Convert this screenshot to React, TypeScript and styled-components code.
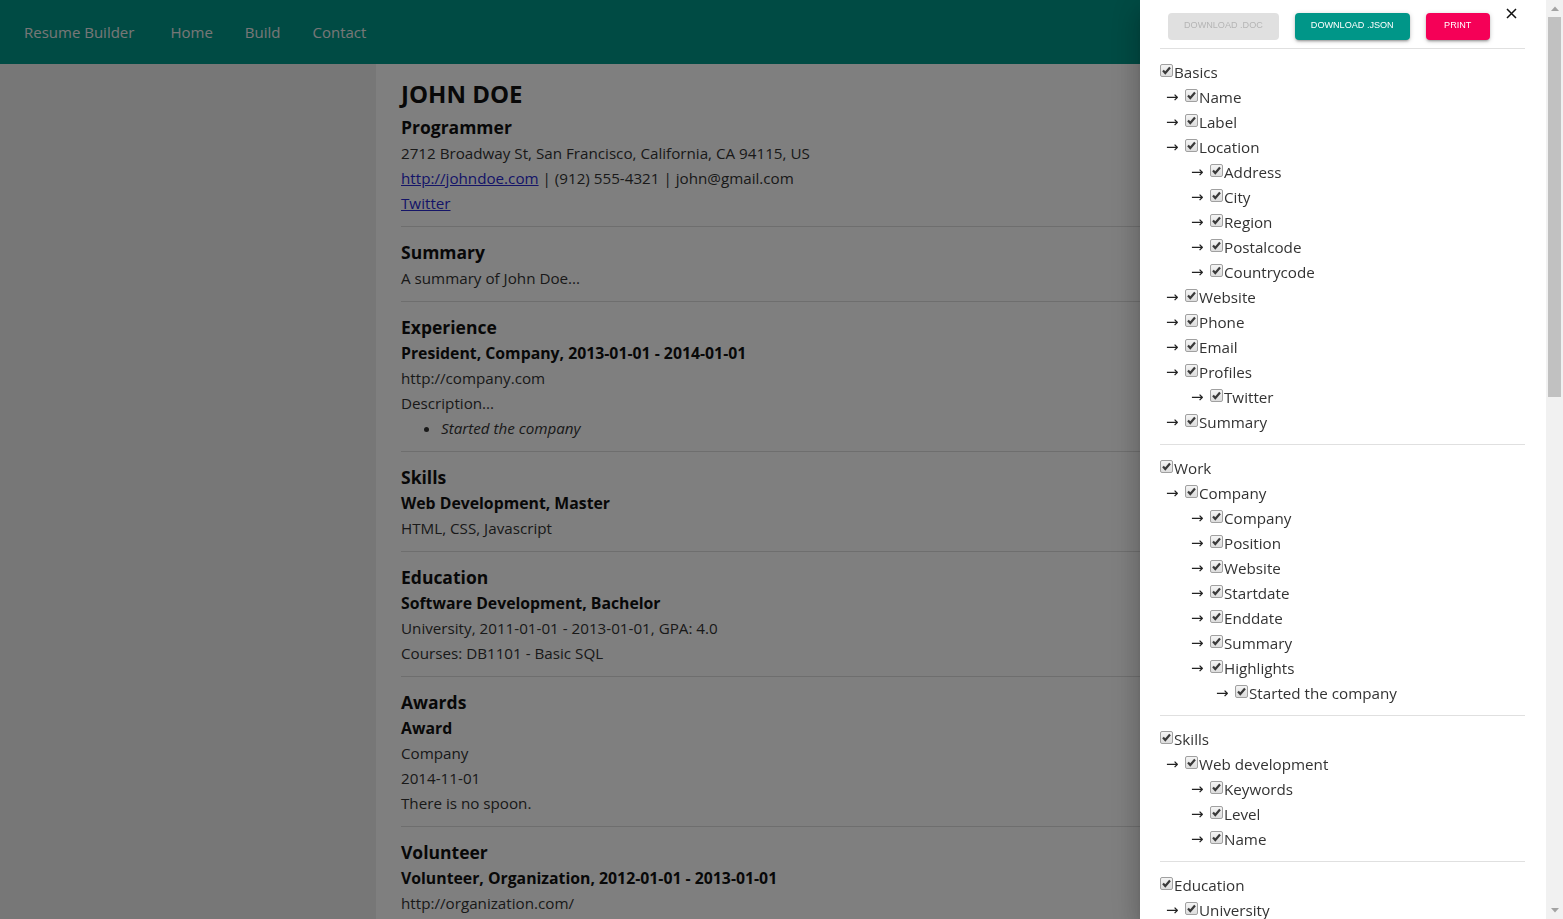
import React from 'react';
import styled, { createGlobalStyle } from 'styled-components';

const GlobalStyle = createGlobalStyle`
  html, body {
    margin: 0;
    height: 100%;
    overflow: hidden;
  }
  body {
    background: #eeeeee;
    font-family: "Open Sans", "Noto Sans", sans-serif;
    font-size: 15.2px;
    color: #333;
  }
`;

const Navbar = styled.header`
  height: 64px;
  background: #009688;
  display: flex;
  align-items: center;
  padding: 0 24px;
  color: #eeeeee;
  font-size: 15px;
`;

const Brand = styled.span`
  margin-right: 20px;
`;

const NavLink = styled.a`
  padding: 0 16px;
  color: inherit;
  text-decoration: none;
`;

const Paper = styled.main`
  width: 811px;
  box-sizing: border-box;
  margin: 0 auto;
  padding: 0 25px;
  background: #fff;
  min-height: calc(100vh - 64px);
`;

const Header = styled.section`
  padding: 15px 0 10px;
  border-bottom: 1px solid #dddddd;
`;

const Name = styled.h1`
  margin: 0;
  font-size: 24px;
  line-height: 30px;
  font-weight: 700;
  color: #111;
`;

const Label = styled.h2`
  margin: 4px 0 0;
  font-size: 17.5px;
  line-height: 28px;
  font-weight: 700;
  color: #111;
`;

const Section = styled.section`
  padding: 11px 0 10px;
  border-bottom: 1px solid #dddddd;
`;

const Title = styled.h3`
  margin: 0;
  font-size: 17.5px;
  line-height: 28px;
  font-weight: 700;
  color: #111;
`;

const Line = styled.div<{ $bold?: boolean }>`
  line-height: 25px;
  font-size: ${(p) => (p.$bold ? '15.8px' : 'inherit')};
  font-weight: ${(p) => (p.$bold ? 700 : 400)};
  color: ${(p) => (p.$bold ? '#111' : '#333')};
`;

const Link = styled.a`
  color: #2a2ad0;
  text-decoration: underline;
`;

const Highlights = styled.ul`
  margin: 0;
  padding-left: 40px;
  line-height: 25px;
  font-style: italic;
`;

const Backdrop = styled.div`
  position: fixed;
  inset: 0;
  background: rgba(0, 0, 0, 0.5);
`;

const Drawer = styled.aside`
  position: fixed;
  top: 0;
  right: 0;
  bottom: 0;
  width: 423px;
  display: flex;
  background: #fff;
  box-shadow: 0 8px 10px -5px rgba(0, 0, 0, 0.2), 0 16px 24px 2px rgba(0, 0, 0, 0.14),
    0 6px 30px 5px rgba(0, 0, 0, 0.12);
`;

const DrawerBody = styled.div`
  flex: 1;
  min-width: 0;
  overflow: hidden;
  padding: 0 21px 0 20px;
`;

const ScrollBar = styled.div`
  width: 17px;
  flex: none;
  background: #f1f1f1;
  display: flex;
  flex-direction: column;
`;

const ScrollButton = styled.div`
  height: 17px;
  flex: none;
  display: flex;
  align-items: center;
  justify-content: center;
`;

const Track = styled.div`
  flex: 1;
  padding: 0 2px;
`;

const Thumb = styled.div`
  height: 380px;
  background: #c1c1c1;
`;

const Toolbar = styled.div`
  display: flex;
  align-items: flex-start;
  padding: 8px 0;
  border-bottom: 1px solid #e0e0e0;
`;

const Button = styled.button<{ $tone: 'disabled' | 'teal' | 'pink' }>`
  height: 27px;
  min-width: 64px;
  margin: 5px 8px 0;
  padding: 0 16px 3px;
  border: none;
  border-radius: 4px;
  font-family: "Liberation Sans", Arial, sans-serif;
  font-size: 9.1px;
  text-transform: uppercase;
  background: ${(p) => (p.$tone === 'teal' ? '#009688' : p.$tone === 'pink' ? '#f50057' : '#e0e0e0')};
  color: ${(p) => (p.$tone === 'disabled' ? '#b5b5b5' : '#fff')};
  box-shadow: ${(p) =>
    p.$tone === 'disabled'
      ? 'none'
      : '0 1px 5px rgba(0,0,0,0.2), 0 2px 2px rgba(0,0,0,0.14), 0 3px 1px -2px rgba(0,0,0,0.12)'};
`;

const Close = styled.button`
  margin-left: auto;
  margin-right: 8px;
  padding: 0;
  border: none;
  background: none;
  width: 11px;
  height: 11px;
  display: flex;
`;

const Group = styled.div`
  padding: 10px 0;
  border-bottom: 1px solid #e0e0e0;
`;

const Row = styled.label<{ $level: number }>`
  display: flex;
  align-items: center;
  height: 25px;
  padding-left: ${(p) => (p.$level === 0 ? 0 : 6 + 25 * (p.$level - 1))}px;
  color: #333;
  white-space: nowrap;
`;

const Arrow = styled.span`
  width: 19px;
  font-family: "Noto Sans", "DejaVu Sans", sans-serif;
  font-size: 15px;
  line-height: 1;
  color: #222;
`;

const Box = styled.span`
  width: 13px;
  height: 13px;
  box-sizing: border-box;
  margin: -2px 1px 0 0;
  border: 1px solid #a0a0a0;
  border-radius: 2px;
  background: linear-gradient(#f4f4f4, #dddddd);
  display: flex;
  align-items: center;
  justify-content: center;
`;

const Check = () => (
  <svg width="11" height="11" viewBox="0 0 11 11">
    <path d="M2 5.5 L4.3 8 L9 2.5" stroke="#3a3a3a" strokeWidth="2.2" fill="none" />
  </svg>
);

const Triangle = ({ down }: { down?: boolean }) => (
  <svg width="8" height="5" viewBox="0 0 8 5">
    <path d={down ? 'M0 0 H8 L4 4.5 Z' : 'M0 5 H8 L4 0.5 Z'} fill="#a3a3a3" />
  </svg>
);

type Item = [number, string];

const groups: Item[][] = [
  [
    [0, 'Basics'], [1, 'Name'], [1, 'Label'], [1, 'Location'], [2, 'Address'], [2, 'City'],
    [2, 'Region'], [2, 'Postalcode'], [2, 'Countrycode'], [1, 'Website'], [1, 'Phone'],
    [1, 'Email'], [1, 'Profiles'], [2, 'Twitter'], [1, 'Summary'],
  ],
  [
    [0, 'Work'], [1, 'Company'], [2, 'Company'], [2, 'Position'], [2, 'Website'],
    [2, 'Startdate'], [2, 'Enddate'], [2, 'Summary'], [2, 'Highlights'], [3, 'Started the company'],
  ],
  [[0, 'Skills'], [1, 'Web development'], [2, 'Keywords'], [2, 'Level'], [2, 'Name']],
  [
    [0, 'Education'], [1, 'University'], [2, 'Institution'], [2, 'Area'], [2, 'Studytype'],
    [2, 'Startdate'], [2, 'Enddate'], [2, 'Gpa'], [2, 'Courses'], [3, 'DB1101 - Basic SQL'],
  ],
  [[0, 'Awards'], [1, 'Award'], [2, 'Title'], [2, 'Date'], [2, 'Awarder'], [2, 'Summary']],
];

export default function App() {
  return (
    <>
      <GlobalStyle />
      <Navbar>
        <Brand>Resume Builder</Brand>
        <NavLink>Home</NavLink>
        <NavLink>Build</NavLink>
        <NavLink>Contact</NavLink>
      </Navbar>
      <Paper>
        <Header>
          <Name>JOHN DOE</Name>
          <Label>Programmer</Label>
          <Line>2712 Broadway St, San Francisco, California, CA 94115, US</Line>
          <Line>
            <Link href="#">http://johndoe.com</Link> | (912) 555-4321 | john@gmail.com
          </Line>
          <Line>
            <Link href="#">Twitter</Link>
          </Line>
        </Header>
        <Section>
          <Title>Summary</Title>
          <Line>A summary of John Doe...</Line>
        </Section>
        <Section>
          <Title>Experience</Title>
          <Line $bold>President, Company, 2013-01-01 - 2014-01-01</Line>
          <Line>http://company.com</Line>
          <Line>Description...</Line>
          <Highlights>
            <li>Started the company</li>
          </Highlights>
        </Section>
        <Section>
          <Title>Skills</Title>
          <Line $bold>Web Development, Master</Line>
          <Line>HTML, CSS, Javascript</Line>
        </Section>
        <Section>
          <Title>Education</Title>
          <Line $bold>Software Development, Bachelor</Line>
          <Line>University, 2011-01-01 - 2013-01-01, GPA: 4.0</Line>
          <Line>Courses: DB1101 - Basic SQL</Line>
        </Section>
        <Section>
          <Title>Awards</Title>
          <Line $bold>Award</Line>
          <Line>Company</Line>
          <Line>2014-11-01</Line>
          <Line>There is no spoon.</Line>
        </Section>
        <Section>
          <Title>Volunteer</Title>
          <Line $bold>Volunteer, Organization, 2012-01-01 - 2013-01-01</Line>
          <Line>http://organization.com/</Line>
          <Line>Description...</Line>
        </Section>
      </Paper>
      <Backdrop />
      <Drawer>
        <DrawerBody>
          <Toolbar>
            <Button $tone="disabled" disabled>Download .doc</Button>
            <Button $tone="teal">Download .json</Button>
            <Button $tone="pink">Print</Button>
            <Close aria-label="close">
              <svg width="11" height="11" viewBox="0 0 11 11">
                <path d="M1 1 L10 10 M10 1 L1 10" stroke="#111" strokeWidth="1.5" />
              </svg>
            </Close>
          </Toolbar>
          {groups.map((g, gi) => (
            <Group key={gi}>
              {g.map(([level, text], i) => (
                <Row key={i} $level={level}>
                  {level > 0 && <Arrow>→</Arrow>}
                  <Box>
                    <Check />
                  </Box>
                  {text}
                </Row>
              ))}
            </Group>
          ))}
        </DrawerBody>
        <ScrollBar>
          <ScrollButton>
            <Triangle />
          </ScrollButton>
          <Track>
            <Thumb />
          </Track>
          <ScrollButton>
            <Triangle down />
          </ScrollButton>
        </ScrollBar>
      </Drawer>
    </>
  );
}
